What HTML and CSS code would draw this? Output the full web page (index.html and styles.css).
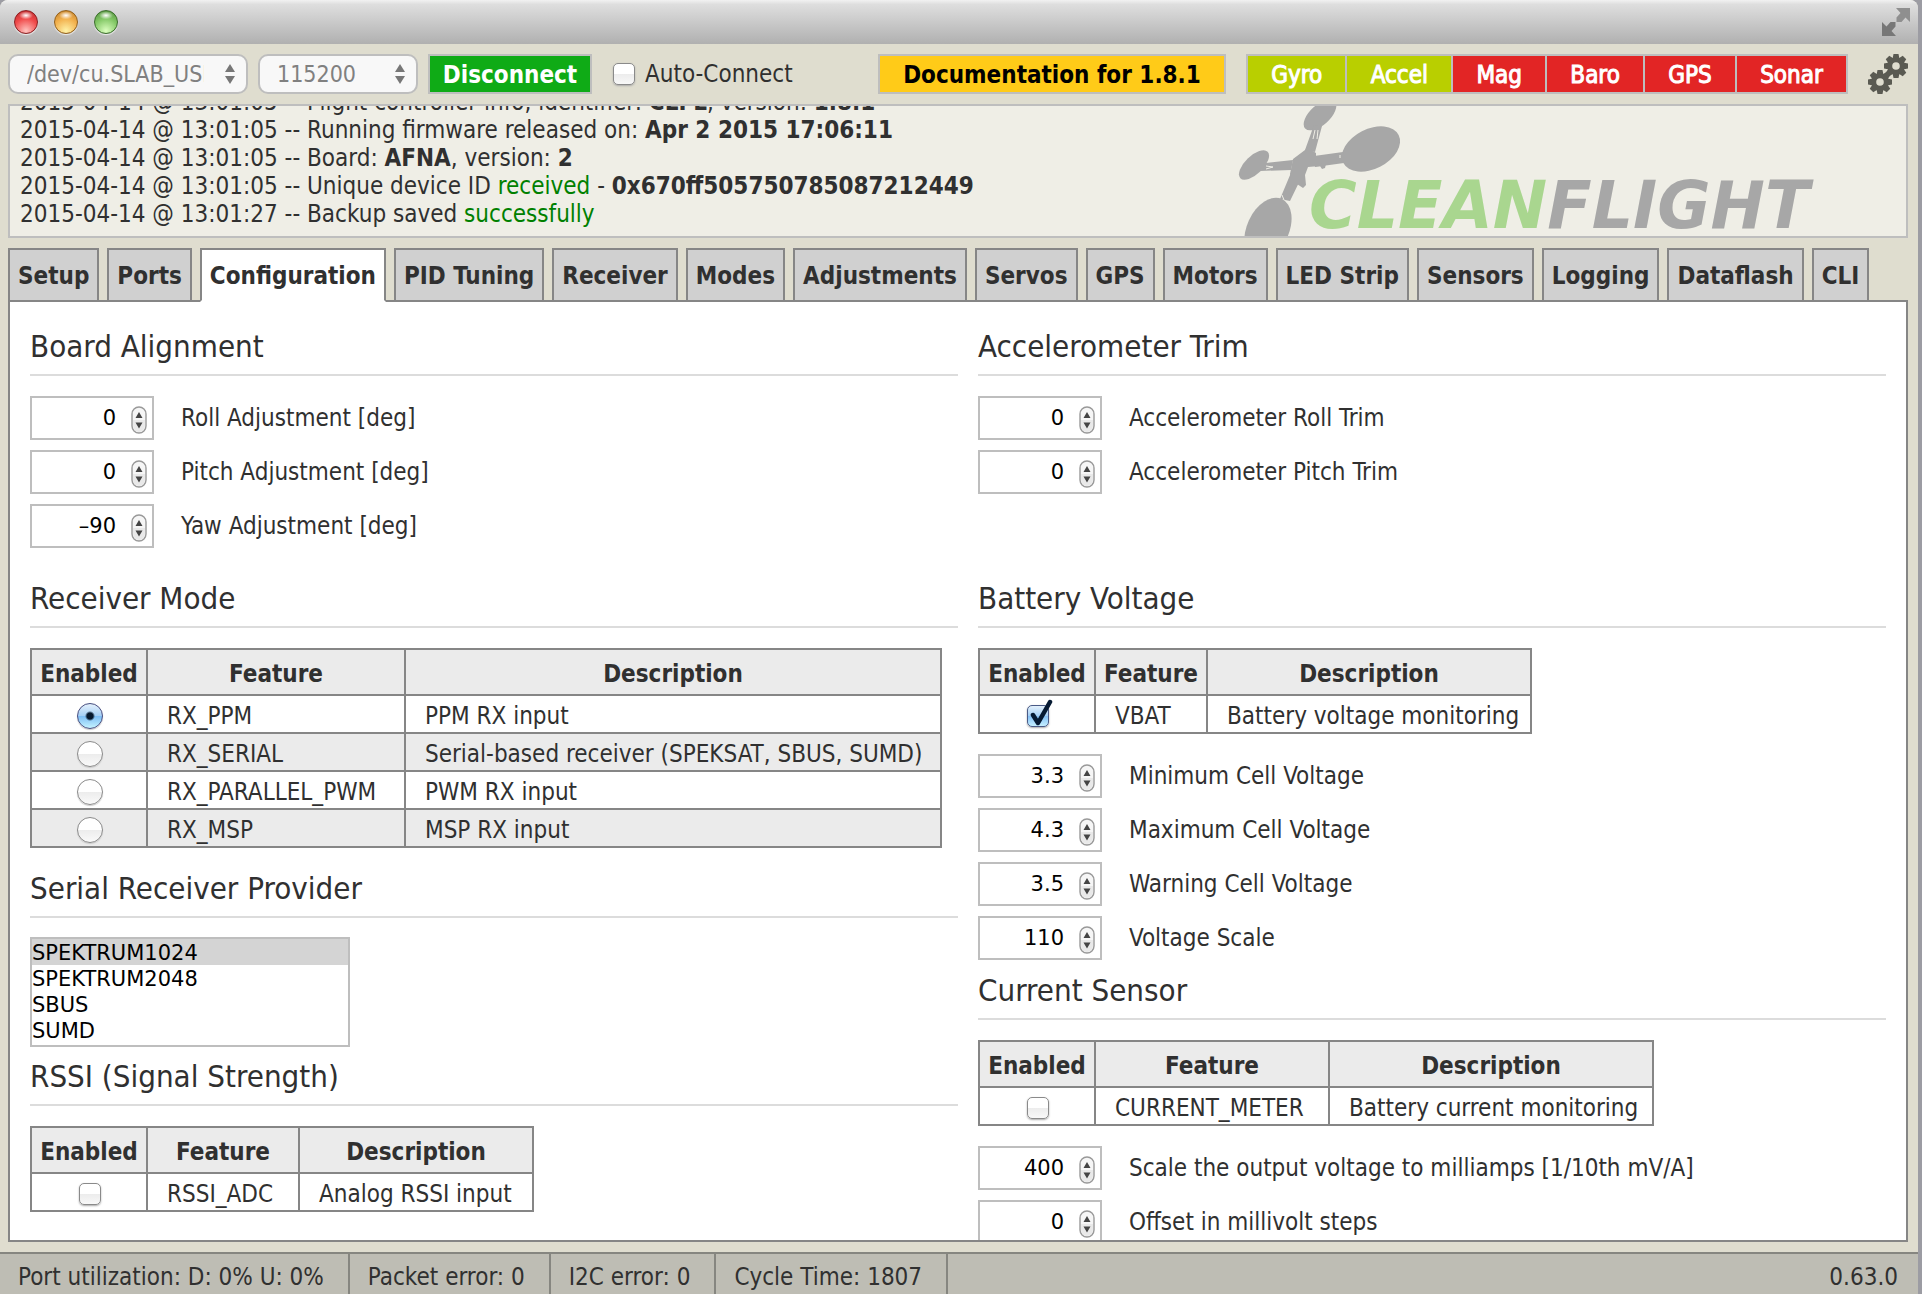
FILE: index.html
```html
<!DOCTYPE html>
<html lang="en">
<head>
<meta charset="utf-8">
<title>Cleanflight Configurator</title>
<link rel="stylesheet" href="styles.css">
</head>
<body>
<svg class="defs" aria-hidden="true">
  <symbol id="stepper" viewBox="0 0 16 28">
    <rect x="1" y="1" width="14" height="26" rx="7" fill="#f6f6f6" stroke="#999" stroke-width="1.4"/>
    <path d="M2 14h12v6a6 6 0 0 1-12 0z" fill="#e9e9e9"/>
    <path d="M8 6l3.500 6h-7zM8 22.500l3.500-6h-7z" fill="#444"/>
  </symbol>
  <symbol id="updown" viewBox="0 0 12 20">
    <path d="M6 0l5 8H1zM6 20l5-8H1z" fill="#777"/>
  </symbol>
  <symbol id="gear" viewBox="-12 -12 24 24">
    <g fill="#5a5a52">
      <path d="M-2.500-12h5l1 5h-7zM-2.500 12h5l1-5h-7z"/>
      <path d="M-2.500-12h5l1 5h-7zM-2.500 12h5l1-5h-7z" transform="rotate(45)"/>
      <path d="M-2.500-12h5l1 5h-7zM-2.500 12h5l1-5h-7z" transform="rotate(90)"/>
      <path d="M-2.500-12h5l1 5h-7zM-2.500 12h5l1-5h-7z" transform="rotate(135)"/>
    </g>
    <circle r="6.300" fill="none" stroke="#5a5a52" stroke-width="5"/>
  </symbol>
</svg>
<div class="app">
  <div class="titlebar">
    <button class="light red" aria-label="Close"></button>
    <button class="light amber" aria-label="Minimize"></button>
    <button class="light green" aria-label="Zoom"></button>
    <button class="expand" aria-label="Full screen">
      <svg width="28" height="28" viewBox="0 0 28 28"><path d="M14 0h14v14l-4.500-4.500-4 4.500h-5V9.500L18.500 5z" fill="#8f8f8f"/><path d="M0 14l4.500 4.500L8.500 14h5v4.500L9.500 23l4.500 5H0z" fill="#777"/></svg>
    </button>
  </div>

  <header class="toolbar">
    <div class="picker port">
      <select aria-label="Port" disabled><option>/dev/cu.SLAB_USBtoUART</option></select>
      <svg class="arrows"><use href="#updown"/></svg>
    </div>
    <div class="picker baud">
      <select aria-label="Baud rate" disabled><option>115200</option></select>
      <svg class="arrows"><use href="#updown"/></svg>
    </div>
    <button class="connect">Disconnect</button>
    <label class="auto"><input type="checkbox" class="tick"> Auto-Connect</label>
    <a class="docs" href="#docs">Documentation for 1.8.1</a>
    <ul class="sensors">
      <li class="on">Gyro</li><li class="on">Accel</li><li>Mag</li><li>Baro</li><li>GPS</li><li>Sonar</li>
    </ul>
    <button class="options" aria-label="Options">
      <svg width="40" height="40" viewBox="0 0 40 40"><use href="#gear" x="16" y="0" width="24" height="24"/><use href="#gear" x="0" y="16" width="24" height="24"/></svg>
    </button>
  </header>

  <div class="log">
    <svg class="logo" width="600" height="130" viewBox="0 0 600 130">
      <g fill="#a7a7a7">
        <ellipse cx="84" cy="9" rx="20" ry="10" transform="rotate(-42 84 9)"/>
        <ellipse cx="135" cy="43" rx="31" ry="20" transform="rotate(-27 135 43)"/>
        <ellipse cx="18" cy="59" rx="19" ry="9" transform="rotate(-44 18 59)"/>
        <ellipse cx="32" cy="123" rx="33" ry="21" transform="rotate(-65 32 123)"/>
        <path d="M69 44l9-25 8 1-7 26zM78 50l29-4 1 11-29 4zM57 54l-27 3-6 8 31-1zM57 62h13L54 95l-10-2z"/>
        <path d="M57 53l12-9 3-2 8 5v3l5 0v7l5 1-1 4-3 1-2-3-12 1-3 8 1 10-3 3-12-8-1-6z"/>
      </g>
      <g stroke="#efeee6" stroke-width="1" fill="none">
        <path d="M79 24l-2 9M82 24l-1 9M30 60l7 1M30 63l7-2M46 89l2 5M104 49v3"/>
      </g>
      <text class="wordmark" x="73" y="122"><tspan fill="#a9d68f">CLEAN</tspan><tspan fill="#a7a7a7">FLIGHT</tspan></text>
    </svg>
    <p>2015-04-14 @ 13:01:05 -- Flight controller info, identifier: <b>CLFL</b>, version: <b>1.8.1</b></p>
    <p>2015-04-14 @ 13:01:05 -- Running firmware released on: <b>Apr 2 2015 17:06:11</b></p>
    <p>2015-04-14 @ 13:01:05 -- Board: <b>AFNA</b>, version: <b>2</b></p>
    <p>2015-04-14 @ 13:01:05 -- Unique device ID <span class="ok">received</span> - <b>0x670ff505750785087212449</b></p>
    <p>2015-04-14 @ 13:01:27 -- Backup saved <span class="ok">successfully</span></p>
  </div>

  <nav class="tabs">
    <a href="#setup">Setup</a>
    <a href="#ports">Ports</a>
    <a href="#configuration" class="active">Configuration</a>
    <a href="#pid">PID Tuning</a>
    <a href="#receiver">Receiver</a>
    <a href="#modes">Modes</a>
    <a href="#adjustments">Adjustments</a>
    <a href="#servos">Servos</a>
    <a href="#gps">GPS</a>
    <a href="#motors">Motors</a>
    <a href="#led">LED Strip</a>
    <a href="#sensors">Sensors</a>
    <a href="#logging">Logging</a>
    <a href="#dataflash">Dataflash</a>
    <a href="#cli">CLI</a>
  </nav>

  <main class="content">
    <section>
      <h2>Board Alignment</h2>
      <label class="field"><span class="spin"><input type="number" value="0"><svg><use href="#stepper"/></svg></span>Roll Adjustment [deg]</label>
      <label class="field"><span class="spin"><input type="number" value="0"><svg><use href="#stepper"/></svg></span>Pitch Adjustment [deg]</label>
      <label class="field"><span class="spin"><input type="text" inputmode="numeric" value="–90"><svg><use href="#stepper"/></svg></span>Yaw Adjustment [deg]</label>
    </section>
    <section>
      <h2>Accelerometer Trim</h2>
      <label class="field"><span class="spin"><input type="number" value="0"><svg><use href="#stepper"/></svg></span>Accelerometer Roll Trim</label>
      <label class="field"><span class="spin"><input type="number" value="0"><svg><use href="#stepper"/></svg></span>Accelerometer Pitch Trim</label>
    </section>
    <section>
      <h2>Receiver Mode</h2>
      <table class="rx">
        <thead><tr><th>Enabled</th><th>Feature</th><th>Description</th></tr></thead>
        <tbody>
          <tr><td><input type="radio" name="rx" id="ppm" checked></td><td><label for="ppm">RX_PPM</label></td><td>PPM RX input</td></tr>
          <tr><td><input type="radio" name="rx" id="serial"></td><td><label for="serial">RX_SERIAL</label></td><td>Serial-based receiver (SPEKSAT, SBUS, SUMD)</td></tr>
          <tr><td><input type="radio" name="rx" id="pwm"></td><td><label for="pwm">RX_PARALLEL_PWM</label></td><td>PWM RX input</td></tr>
          <tr><td><input type="radio" name="rx" id="msp"></td><td><label for="msp">RX_MSP</label></td><td>MSP RX input</td></tr>
        </tbody>
      </table>
      <h2 id="provider">Serial Receiver Provider</h2>
      <select class="list" size="4" aria-labelledby="provider">
        <option selected>SPEKTRUM1024</option>
        <option>SPEKTRUM2048</option>
        <option>SBUS</option>
        <option>SUMD</option>
      </select>
      <h2>RSSI (Signal Strength)</h2>
      <table class="rssi">
        <thead><tr><th>Enabled</th><th>Feature</th><th>Description</th></tr></thead>
        <tbody><tr><td><input type="checkbox" class="tick" id="rssi"></td><td><label for="rssi">RSSI_ADC</label></td><td>Analog RSSI input</td></tr></tbody>
      </table>
      <h2>Receiver failsafe</h2>
    </section>
    <section>
      <h2>Battery Voltage</h2>
      <table class="vbat">
        <thead><tr><th>Enabled</th><th>Feature</th><th>Description</th></tr></thead>
        <tbody><tr><td><span class="check"><input type="checkbox" class="tick" id="vbat" checked><svg viewBox="0 0 26 32"><path d="M6 17l5 8L23 4" fill="none" stroke="#061a33" stroke-width="4.500" stroke-linecap="round" stroke-linejoin="round"/></svg></span></td><td><label for="vbat">VBAT</label></td><td>Battery voltage monitoring</td></tr></tbody>
      </table>
      <label class="field"><span class="spin"><input type="number" value="3.3" step="0.1"><svg><use href="#stepper"/></svg></span>Minimum Cell Voltage</label>
      <label class="field"><span class="spin"><input type="number" value="4.3" step="0.1"><svg><use href="#stepper"/></svg></span>Maximum Cell Voltage</label>
      <label class="field"><span class="spin"><input type="number" value="3.5" step="0.1"><svg><use href="#stepper"/></svg></span>Warning Cell Voltage</label>
      <label class="field"><span class="spin"><input type="number" value="110"><svg><use href="#stepper"/></svg></span>Voltage Scale</label>
      <h2>Current Sensor</h2>
      <table class="amp">
        <thead><tr><th>Enabled</th><th>Feature</th><th>Description</th></tr></thead>
        <tbody><tr><td><input type="checkbox" class="tick" id="meter"></td><td><label for="meter">CURRENT_METER</label></td><td>Battery current monitoring</td></tr></tbody>
      </table>
      <label class="field"><span class="spin"><input type="number" value="400"><svg><use href="#stepper"/></svg></span>Scale the output voltage to milliamps [1/10th mV/A]</label>
      <label class="field"><span class="spin"><input type="number" value="0"><svg><use href="#stepper"/></svg></span>Offset in millivolt steps</label>
    </section>
  </main>

  <footer class="status">
    <span>Port utilization: D: 0% U: 0%</span>
    <span>Packet error: 0</span>
    <span>I2C error: 0</span>
    <span>Cycle Time: 1807</span>
    <span class="version">0.63.0</span>
  </footer>
</div>
</body>
</html>
```
FILE: styles.css
```css
* { box-sizing: border-box; }
html, body { height: 100%; margin: 0; }
body {
  padding-right: 4px;
  background: #9c9ca3;
  font-family: "DejaVu Sans Condensed", "DejaVu Sans", sans-serif;
  font-size: 24px;
  line-height: 28px;
  color: #303030;
}
button, input, select { font: inherit; margin: 0; }
.defs { display: none; }
.app {
  height: 100%;
  display: flex;
  flex-direction: column;
  background: #dfddcf;
  border-radius: 8px 8px 0 0;
  overflow: hidden;
}

/* window title bar */
.titlebar {
  flex: none;
  height: 44px;
  padding: 0 8px 0 14px;
  display: flex;
  align-items: center;
  gap: 16px;
  background: linear-gradient(#f2f2f2, #dedede 10%, #b0b0b0);
}
.light { width: 24px; height: 24px; padding: 0; border-radius: 50%; border: 1px solid; box-shadow: 0 1px 1px #eee; }
.red { border-color: #8c1f22; background: radial-gradient(ellipse 7px 4px at 50% 20%, #fff, transparent), radial-gradient(circle at 50% 90%, #ffc4c0, #f04a4a 55%, #b8282b); }
.amber { border-color: #93601c; background: radial-gradient(ellipse 7px 4px at 50% 20%, #fff, transparent), radial-gradient(circle at 50% 90%, #fff3a8, #f2b04c 55%, #bd7c28); }
.green { border-color: #3b6e2c; background: radial-gradient(ellipse 7px 4px at 50% 20%, #fff, transparent), radial-gradient(circle at 50% 90%, #dcffc0, #82c765 55%, #4f8c3b); }
.expand { margin-left: auto; padding: 0; border: 0; background: none; display: flex; }

/* connection toolbar */
.toolbar {
  flex: none;
  padding: 10px 10px 10px 8px;
  display: flex;
  align-items: center;
}
.picker { position: relative; height: 40px; }
.port { width: 240px; margin-right: 10px; }
.baud { width: 160px; margin-right: 10px; }
.picker select {
  appearance: none;
  width: 100%;
  height: 40px;
  padding: 0 42px 0 17px;
  border: 2px solid #bebebe;
  border-radius: 10px;
  background: #f8f8f8;
  color: #808080;
  font-size: 23px;
  opacity: 1;
}
.arrows { position: absolute; right: 12px; top: 10px; width: 12px; height: 20px; }
.connect, .docs {
  height: 40px;
  padding: 0;
  border: 2px solid #bebebe;
  font-weight: bold;
  line-height: 38px;
  text-align: center;
  text-decoration: none;
}
.connect { width: 164px; background: #0fab16; color: #fff; }
.auto { display: flex; align-items: center; gap: 10px; margin-left: 21px; }
.docs { width: 348px; margin-left: auto; background: #ffcb18; color: #000; }
.sensors {
  width: 602px;
  height: 40px;
  margin: 0 20px;
  padding: 0;
  display: flex;
  list-style: none;
  border: 2px solid #bebebe;
  line-height: 38px;
  color: #fff;
  text-align: center;
  -webkit-text-stroke: 1px #fff;
}
.sensors li { flex: auto; background: #e22525; }
.sensors .on { background: #b9cf00; }
.sensors li + li { border-left: 2px solid #bebebe; }
.options { padding: 0; border: 0; background: none; display: flex; }

/* message log */
.log {
  flex: none;
  position: relative;
  height: 134px;
  margin: 0 10px 10px 8px;
  padding: 0 10px 8px;
  display: flex;
  flex-direction: column;
  justify-content: flex-end;
  border: 2px solid #bebebe;
  background: #efeee6;
  overflow: hidden;
}
.log p { flex: none; margin: 0; position: relative; }
.ok { color: #008000; }
.logo { position: absolute; right: 70px; top: 0; }
.wordmark { font: italic bold 65px "DejaVu Sans", sans-serif; }

/* tabs */
.tabs {
  flex: none;
  position: relative;
  z-index: 1;
  margin: 0 10px -2px 8px;
  display: flex;
  gap: 8px;
}
.tabs a {
  height: 54px;
  padding: 0 8px;
  border: 2px solid #868686;
  background: #d0d0d0;
  color: #303030;
  font-weight: bold;
  line-height: 52px;
  white-space: nowrap;
  text-decoration: none;
}
.tabs .active { background: #fff; border-bottom-color: #fff; }

/* configuration page */
.content {
  flex: 1;
  min-height: 0;
  margin: 0 10px 10px 8px;
  padding: 24px 20px 0;
  display: grid;
  grid-template-columns: 928fr 908fr;
  grid-template-rows: auto auto;
  gap: 20px;
  align-content: start;
  border: 2px solid #868686;
  background: #fff;
  overflow: hidden;
}
h2 {
  margin: 0 0 20px;
  padding-bottom: 7px;
  border-bottom: 2px solid #dcdcdc;
  font-size: 31px;
  font-weight: normal;
  line-height: 41px;
}
.field { display: flex; align-items: center; gap: 27px; margin-bottom: 10px; }
.spin { position: relative; width: 124px; height: 44px; }
.spin input {
  appearance: textfield;
  width: 100%;
  height: 44px;
  padding: 0 36px 0 4px;
  border: 2px solid #bebebe;
  border-radius: 0;
  background: #fff;
  color: #000;
  font-size: 21px;
  font-family: "DejaVu Sans", sans-serif;
  text-align: right;
}
.spin input::-webkit-inner-spin-button { display: none; }
.spin svg { position: absolute; right: 7px; top: 10px; width: 16px; height: 28px; }

table { table-layout: fixed; border-collapse: collapse; margin-bottom: 20px; }
th, td { height: 38px; padding: 4px 0 0; border: 2px solid #868686; white-space: nowrap; }
th { height: 46px; background: #ebebeb; }
th:first-child { width: 116px; }
td:first-child { padding: 4px 0 0 2px; text-align: center; line-height: 0; }
td + td { padding-left: 19px; }
tbody tr:nth-child(even) { background: #ebebeb; }
.rx { width: 912px; }
.rx th:nth-child(2) { width: 258px; }
.rssi { width: 504px; }
.rssi th:nth-child(2) { width: 152px; }
.vbat { width: 554px; }
.vbat th:nth-child(2) { width: 112px; }
.amp { width: 676px; }
.amp th:nth-child(2) { width: 234px; }

.tick {
  appearance: none;
  width: 22px;
  height: 22px;
  border: 1px solid #8a8a8a;
  border-radius: 5px;
  background: linear-gradient(#fff 50%, #ececec 50%, #f8f8f8);
  box-shadow: 0 1px 2px #aaa;
  vertical-align: middle;
}
.tick:checked { border-color: #4a5a86; background: linear-gradient(#e4f1fc, #a4cef5 50%, #84bff5 50%, #c4efff); }
.check { position: relative; display: inline-block; }
.check svg { position: absolute; left: 0; top: -7px; width: 26px; height: 32px; pointer-events: none; }
input[type="radio"] {
  appearance: none;
  width: 26px;
  height: 26px;
  border: 1px solid #8a8a8a;
  border-radius: 50%;
  background: linear-gradient(#fff 50%, #ececec 50%, #fafafa);
  box-shadow: 0 1px 1px #ccc;
  vertical-align: middle;
}
input[type="radio"]:checked {
  border-color: #4a4f80;
  background: radial-gradient(circle, #06182e 3px, transparent 5px), linear-gradient(#e4f1fc, #a4cef5 50%, #7cbcf5 50%, #c4f4ff);
}
.list {
  display: block;
  width: 320px;
  height: 110px;
  margin: -1px 0 9px;
  padding: 0;
  border: 2px solid #bebebe;
  border-radius: 0;
  background: #fff;
  color: #000;
  font-size: 21px;
  font-family: "DejaVu Sans", sans-serif;
  overflow: hidden;
}
.list option { height: 26px; min-height: 26px; padding: 2px 0 0; line-height: 24px; color: #000; }
.list option:checked { background: #d4d4d4 linear-gradient(#d4d4d4, #d4d4d4); }

/* status bar */
.status {
  flex: none;
  height: 42px;
  display: flex;
  border-top: 2px solid #868680;
  background: #bebdb4;
  line-height: 46px;
}
.status span { padding: 0 24px 0 18px; border-right: 2px solid #868680; white-space: nowrap; }
.status .version { margin-left: auto; padding-right: 20px; border: 0; }
```
